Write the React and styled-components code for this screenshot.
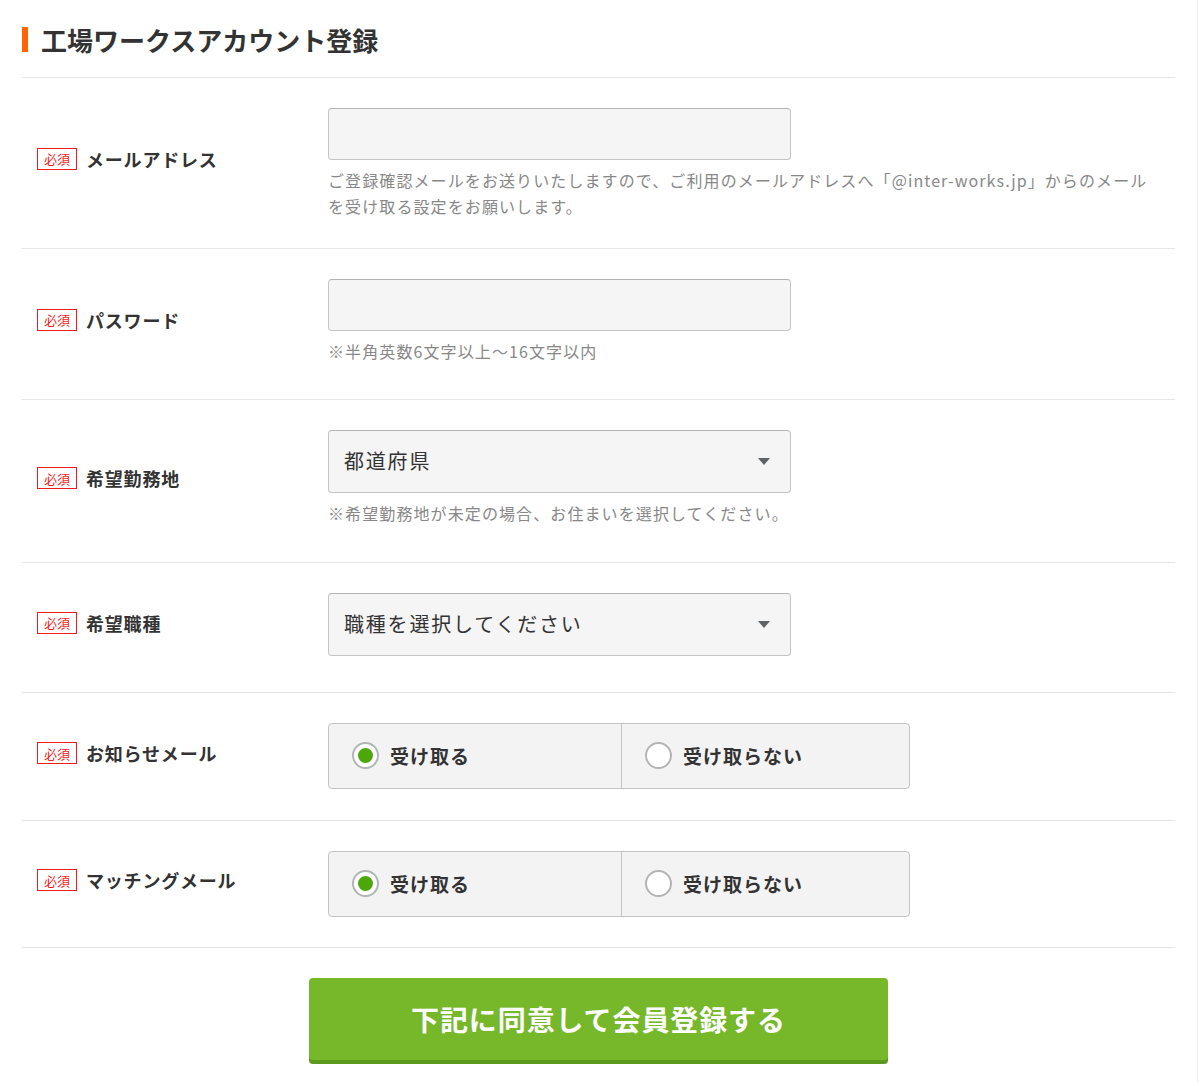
import React, { useState } from "react";
import styled, { createGlobalStyle } from "styled-components";

const GlobalStyle = createGlobalStyle`
  body {
    margin: 0;
    background: #fff;
    color: #333;
    font-family: "Noto Sans CJK JP", "Noto Sans", sans-serif;
  }
  * { box-sizing: border-box; }
`;

const prefs = ["都道府県", "北海道", "東京都", "大阪府"];
const jobs = ["職種を選択してください", "製造", "検査", "物流"];

const App = () => {
  const [news, setNews] = useState("yes");
  const [matching, setMatching] = useState("yes");

  return (
    <>
      <GlobalStyle />
      <Card>
        <Page>
          <Heading>工場ワークスアカウント登録</Heading>

          <Row $pb={29}>
            <LabelCell $lift={5}>
              <Badge>必須</Badge>
              <LabelText>メールアドレス</LabelText>
            </LabelCell>
            <FieldCell>
              <TextInput type="email" />
              <Help>
                ご登録確認メールをお送りいたしますので、ご利用のメールアドレスへ「@inter-works.jp」からのメールを受け取る設定をお願いします。
              </Help>
            </FieldCell>
          </Row>

          <Row $pb={35}>
            <LabelCell>
              <Badge>必須</Badge>
              <LabelText>パスワード</LabelText>
            </LabelCell>
            <FieldCell>
              <TextInput type="password" />
              <Help>※半角英数6文字以上〜16文字以内</Help>
            </FieldCell>
          </Row>

          <Row $pb={36}>
            <LabelCell $lift={0}>
              <Badge>必須</Badge>
              <LabelText>希望勤務地</LabelText>
            </LabelCell>
            <FieldCell>
              <SelectWrap>
                <Select defaultValue={prefs[0]}>
                  {prefs.map((p) => (
                    <option key={p}>{p}</option>
                  ))}
                </Select>
              </SelectWrap>
              <Help>※希望勤務地が未定の場合、お住まいを選択してください。</Help>
            </FieldCell>
          </Row>

          <Row $pb={36}>
            <LabelCell>
              <Badge>必須</Badge>
              <LabelText>希望職種</LabelText>
            </LabelCell>
            <FieldCell>
              <SelectWrap>
                <Select defaultValue={jobs[0]}>
                  {jobs.map((j) => (
                    <option key={j}>{j}</option>
                  ))}
                </Select>
              </SelectWrap>
            </FieldCell>
          </Row>

          <Row $pb={31}>
            <LabelCell $lift={3}>
              <Badge>必須</Badge>
              <LabelText>お知らせメール</LabelText>
            </LabelCell>
            <FieldCell>
              <RadioGroup>
                <RadioOption>
                  <HiddenRadio name="news" checked={news === "yes"} onChange={() => setNews("yes")} />
                  <RadioMark $checked={news === "yes"} />
                  受け取る
                </RadioOption>
                <RadioOption>
                  <HiddenRadio name="news" checked={news === "no"} onChange={() => setNews("no")} />
                  <RadioMark $checked={news === "no"} />
                  受け取らない
                </RadioOption>
              </RadioGroup>
            </FieldCell>
          </Row>

          <Row $pb={30}>
            <LabelCell $lift={4}>
              <Badge>必須</Badge>
              <LabelText>マッチングメール</LabelText>
            </LabelCell>
            <FieldCell>
              <RadioGroup>
                <RadioOption>
                  <HiddenRadio name="matching" checked={matching === "yes"} onChange={() => setMatching("yes")} />
                  <RadioMark $checked={matching === "yes"} />
                  受け取る
                </RadioOption>
                <RadioOption>
                  <HiddenRadio name="matching" checked={matching === "no"} onChange={() => setMatching("no")} />
                  <RadioMark $checked={matching === "no"} />
                  受け取らない
                </RadioOption>
              </RadioGroup>
            </FieldCell>
          </Row>

          <Actions>
            <SubmitButton type="button">下記に同意して会員登録する</SubmitButton>
          </Actions>
        </Page>
      </Card>
    </>
  );
};

export default App;

/* styles */
const Card = styled.div`
  width: 1198px;
  border-right: 1px solid #efefef;
`;

const Page = styled.div`
  width: 1153px;
  margin-left: 22px;
`;

const Heading = styled.h1`
  display: flex;
  align-items: center;
  height: 78px;
  margin: 0;
  padding-top: 2px;
  border-bottom: 1px solid #e6e6e6;
  font-size: 26px;
  font-weight: 700;
  color: #333;

  &::before {
    content: "";
    width: 6px;
    height: 25px;
    margin-right: 13px;
    background: #ff6600;
  }
`;

const Row = styled.div`
  display: grid;
  grid-template-columns: 306px 1fr;
  padding: 30px 0 ${(p) => p.$pb ?? 35}px;
  border-bottom: 1px solid #e6e6e6;
`;

// $lift nudges the label up a little, the row content is not always centred
const LabelCell = styled.div`
  display: flex;
  align-items: center;
  gap: 9px;
  padding-left: 15px;
  padding-bottom: ${(p) => (p.$lift ?? 2) * 2}px;
`;

const Badge = styled.span`
  display: inline-flex;
  align-items: center;
  justify-content: center;
  width: 40px;
  height: 22px;
  border: 1px solid #f01c1c;
  color: #f01c1c;
  font-size: 13px;
  line-height: 1;
`;

const LabelText = styled.span`
  font-size: 18px;
  font-weight: 700;
  letter-spacing: 0.8px;
  color: #333;
`;

const FieldCell = styled.div`
  padding-right: 20px;
`;

const TextInput = styled.input`
  display: block;
  width: 463px;
  height: 52px;
  padding: 0 15px;
  border: 1px solid #c4c4c4;
  border-top-color: #b4b4b4;
  border-radius: 4px;
  background: #f5f5f5;
  font: inherit;
  font-size: 18px;
  outline: none;
`;

const Help = styled.p`
  margin: 7px 0 0;
  font-size: 16px;
  line-height: 26px;
  letter-spacing: 1.1px;
  color: #888;
`;

const SelectWrap = styled.div`
  position: relative;
  width: 463px;

  &::after {
    content: "";
    position: absolute;
    top: 50%;
    right: 21px;
    margin-top: -4px;
    border-left: 6px solid transparent;
    border-right: 6px solid transparent;
    border-top: 7px solid #5f6366;
    pointer-events: none;
  }
`;

const Select = styled.select`
  display: block;
  width: 100%;
  height: 63px;
  padding: 0 40px 3px 15px;
  border: 1px solid #c4c4c4;
  border-top-color: #b4b4b4;
  border-radius: 4px;
  background: #f5f5f5;
  appearance: none;
  font: inherit;
  font-size: 20px;
  letter-spacing: 1.8px;
  color: #333;
  outline: none;
`;

const RadioGroup = styled.div`
  display: grid;
  grid-template-columns: 292px 290px;
  width: 582px;
  height: 66px;
  border: 1px solid #c4c4c4;
  border-radius: 4px;
  background: #f3f3f4;
  overflow: hidden;
`;

const RadioOption = styled.label`
  display: flex;
  align-items: center;
  gap: 11px;
  padding: 0 0 2px 23px;
  font-size: 19px;
  font-weight: 700;
  letter-spacing: 1px;
  color: #333;
  cursor: pointer;

  & + & {
    border-left: 1px solid #c4c4c4;
  }
`;

const HiddenRadio = styled.input.attrs({ type: "radio" })`
  position: absolute;
  opacity: 0;
  pointer-events: none;
`;

const RadioMark = styled.span`
  position: relative;
  width: 27px;
  height: 27px;
  flex-shrink: 0;
  border: 2px solid #b3b3b3;
  border-radius: 50%;
  background: #fff;

  &::after {
    content: "";
    position: absolute;
    inset: 4px;
    border-radius: 50%;
    background: #4ea60d;
    display: ${(p) => (p.$checked ? "block" : "none")};
  }
`;

const Actions = styled.div`
  display: flex;
  justify-content: center;
  padding: 30px 0 22px;
`;

const SubmitButton = styled.button`
  width: 579px;
  height: 82px;
  padding-bottom: 2px;
  border: none;
  border-radius: 4px;
  background: #76b82a;
  box-shadow: 0 4px 0 #5b9a1e;
  color: #fff;
  font: inherit;
  font-size: 28px;
  font-weight: 700;
  letter-spacing: 0.9px;
  cursor: pointer;
`;
